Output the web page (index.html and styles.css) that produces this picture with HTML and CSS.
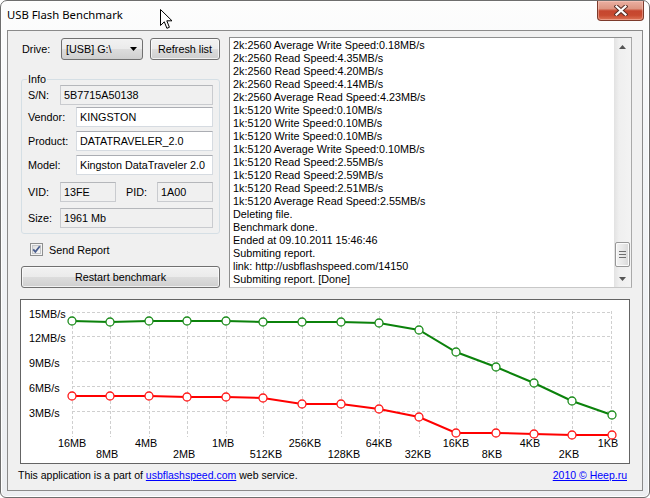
FILE: index.html
```html
<!DOCTYPE html>
<html>
<head>
<meta charset="utf-8">
<title>USB Flash Benchmark</title>
<link rel="stylesheet" href="styles.css">
</head>
<body>
<div class="window">
  <div class="titlebar">
    <span class="title">USB Flash Benchmark</span>
    <div class="close">
      <svg width="14" height="11" viewBox="0 0 14 11">
        <path d="M2.5 1.5 L11.5 9.5 M11.5 1.5 L2.5 9.5" stroke="#5a3028" stroke-width="4.2" stroke-linecap="square"/>
        <path d="M2.5 1.5 L11.5 9.5 M11.5 1.5 L2.5 9.5" stroke="#ffffff" stroke-width="2.2" stroke-linecap="square"/>
      </svg>
    </div>
  </div>
  <div class="client">
    <div class="top">
      <div class="left">
        <div class="drive-row">
          <span class="drive-lbl">Drive:</span>
          <div class="combo">
            <span class="combo-text">[USB] G:\</span>
            <svg class="combo-arrow" width="7" height="4" viewBox="0 0 7 4"><path d="M0 0 H7 L3.5 4 Z" fill="#000"/></svg>
          </div>
          <div class="btn refresh">Refresh list</div>
        </div>
        <fieldset class="group">
          <legend>Info</legend>
          <div class="row mt0"><span class="lbl short">S/N:</span><div class="box ro">5B7715A50138</div></div>
          <div class="row mt2"><span class="lbl long">Vendor:</span><div class="box">KINGSTON</div></div>
          <div class="row mt4"><span class="lbl long">Product:</span><div class="box">DATATRAVELER_2.0</div></div>
          <div class="row mt4"><span class="lbl long">Model:</span><div class="box">Kingston DataTraveler 2.0</div></div>
          <div class="row mt7">
            <span class="lbl short">VID:</span><div class="box ro vid">13FE</div>
            <span class="lbl pid-lbl">PID:</span><div class="box ro">1A00</div>
          </div>
          <div class="row mt6"><span class="lbl short">Size:</span><div class="box ro">1961 Mb</div></div>
        </fieldset>
        <div class="check-row">
          <svg class="checkbox" width="13" height="13" viewBox="0 0 13 13">
            <defs>
              <linearGradient id="cbg" x1="0" y1="0" x2="1" y2="1">
                <stop offset="0" stop-color="#dcdcdc"/>
                <stop offset="1" stop-color="#fbfbfb"/>
              </linearGradient>
            </defs>
            <rect x="0.5" y="0.5" width="12" height="12" fill="#f4f4f4" stroke="#8e8f8f"/>
            <rect x="2.5" y="2.5" width="8" height="8" fill="url(#cbg)" stroke="#c4c6c8"/>
            <path d="M3.2 6.3 L5.4 8.8 L9.8 3.2" fill="none" stroke="#4a5e8e" stroke-width="1.8"/>
          </svg>
          <span>Send Report</span>
        </div>
        <div class="btn restart">Restart benchmark</div>
      </div>
      <div class="log">
        <div class="log-text">2k:2560 Average Write Speed:0.18MB/s
2k:2560 Read Speed:4.35MB/s
2k:2560 Read Speed:4.20MB/s
2k:2560 Read Speed:4.14MB/s
2k:2560 Average Read Speed:4.23MB/s
1k:5120 Write Speed:0.10MB/s
1k:5120 Write Speed:0.10MB/s
1k:5120 Write Speed:0.10MB/s
1k:5120 Average Write Speed:0.10MB/s
1k:5120 Read Speed:2.55MB/s
1k:5120 Read Speed:2.59MB/s
1k:5120 Read Speed:2.51MB/s
1k:5120 Average Read Speed:2.55MB/s
Deleting file.
Benchmark done.
Ended at 09.10.2011 15:46:46
Submiting report.
link: http://usbflashspeed.com/14150
Submiting report. [Done]</div>
        <div class="scrollbar">
          <div class="sb-btn"><svg width="7" height="4" viewBox="0 0 7 4"><path d="M0 4 H7 L3.5 0 Z" fill="#555"/></svg></div>
          <div class="sb-track">
            <div class="sb-thumb"><span></span><span></span><span></span></div>
          </div>
          <div class="sb-btn"><svg width="7" height="4" viewBox="0 0 7 4"><path d="M0 0 H7 L3.5 4 Z" fill="#555"/></svg></div>
        </div>
      </div>
    </div>
    <div class="chart">
      <svg width="608" height="163" viewBox="0 0 608 163" class="chart-svg">
        <g class="grid">
          <path d="M51 12.5 H591 M51 36.5 H591 M51 61.5 H591 M51 86.5 H591 M51 111.5 H591"/>
          <path d="M51.5 11 V137 M89.5 11 V137 M128.5 11 V137 M166.5 11 V137 M205.5 11 V137 M242.5 11 V137 M281.5 11 V137 M320.5 11 V137 M358.5 11 V137 M398.5 11 V137 M435.5 11 V137 M475.5 11 V137 M513.5 11 V137 M551.5 11 V137 M590.5 11 V137"/>
        </g>
        <g class="ylabels">
          <text x="8" y="17.5">15MB/s</text>
          <text x="8" y="41.5">12MB/s</text>
          <text x="8" y="66.5">9MB/s</text>
          <text x="8" y="91.5">6MB/s</text>
          <text x="8" y="116.5">3MB/s</text>
        </g>
        <g class="xlabels">
          <text x="51" y="147">16MB</text>
          <text x="86" y="157.5">8MB</text>
          <text x="125" y="147">4MB</text>
          <text x="163" y="157.5">2MB</text>
          <text x="202" y="147">1MB</text>
          <text x="245" y="157.5">512KB</text>
          <text x="284" y="147">256KB</text>
          <text x="323" y="157.5">128KB</text>
          <text x="358" y="147">64KB</text>
          <text x="397" y="157.5">32KB</text>
          <text x="435" y="147">16KB</text>
          <text x="471" y="157.5">8KB</text>
          <text x="509" y="147">4KB</text>
          <text x="548" y="157.5">2KB</text>
          <text x="587" y="147">1KB</text>
        </g>
        <polyline class="line-green" points="51,21 89,22 128,21 166,21 205,21 242,22 281,22 320,22 358,23 398,30 435,52 475,67 513,83 551,101 591,115"/>
        <polyline class="line-red" points="51,96 89,96 128,96 166,97 205,97 242,98 281,104 320,104 358,109 398,117 435,133 475,133 513,134 551,135 591,135"/>
        <g class="dots-green">
          <circle cx="51" cy="21" r="4"/><circle cx="89" cy="22" r="4"/><circle cx="128" cy="21" r="4"/><circle cx="166" cy="21" r="4"/><circle cx="205" cy="21" r="4"/><circle cx="242" cy="22" r="4"/><circle cx="281" cy="22" r="4"/><circle cx="320" cy="22" r="4"/><circle cx="358" cy="23" r="4"/><circle cx="398" cy="30" r="4"/><circle cx="435" cy="52" r="4"/><circle cx="475" cy="67" r="4"/><circle cx="513" cy="83" r="4"/><circle cx="551" cy="101" r="4"/><circle cx="591" cy="115" r="4"/>
        </g>
        <g class="dots-red">
          <circle cx="51" cy="96" r="4"/><circle cx="89" cy="96" r="4"/><circle cx="128" cy="96" r="4"/><circle cx="166" cy="97" r="4"/><circle cx="205" cy="97" r="4"/><circle cx="242" cy="98" r="4"/><circle cx="281" cy="104" r="4"/><circle cx="320" cy="104" r="4"/><circle cx="358" cy="109" r="4"/><circle cx="398" cy="117" r="4"/><circle cx="435" cy="133" r="4"/><circle cx="475" cy="133" r="4"/><circle cx="513" cy="134" r="4"/><circle cx="551" cy="135" r="4"/><circle cx="591" cy="135" r="4"/>
        </g>
      </svg>
    </div>
    <div class="footer">
      <span>This application is a part of <a class="link">usbflashspeed.com</a> web service.</span>
      <a class="link">2010 © Heep.ru</a>
    </div>
  </div>
  <svg class="cursor" width="13" height="21" viewBox="0 0 13 21">
    <path d="M0.5 0.5 L0.5 16.5 L4.3 12.8 L6.9 19.3 L9.4 18.3 L6.8 11.8 L12 11.8 Z" fill="#ffffff" stroke="#000000" stroke-width="1" stroke-linejoin="miter"/>
  </svg>
</div>
</body>
</html>
```
FILE: styles.css
```css
* { box-sizing: border-box; }
html, body { margin: 0; padding: 0; background: #ffffff; }
body {
  font-family: "Liberation Sans", Arial, sans-serif;
  font-size: 10.8px;
  color: #000;
}
.window {
  position: relative;
  width: 650px;
  height: 498px;
  border: 1px solid #6e6e6e;
  border-radius: 7px 7px 6px 6px;
  background: linear-gradient(to bottom, #fdfdfd 0, #f3f5f7 30%, #eceef1 100%);
  box-shadow: inset 0 0 0 1px #ffffff;
  display: flex;
  flex-direction: column;
  overflow: hidden;
}
.titlebar {
  height: 29px;
  display: flex;
  justify-content: space-between;
  align-items: flex-start;
}
.title {
  font-family: "Noto Sans", "Open Sans", sans-serif;
  font-size: 11.3px;
  line-height: 16px;
  margin: 6px 0 0 6px;
  color: #000;
}
.close {
  width: 47px;
  height: 20px;
  margin-right: 5px;
  border: 1px solid #7c3a2c;
  border-top: none;
  border-radius: 0 0 4px 4px;
  background: linear-gradient(to bottom, #eab0a2 0%, #dd9582 40%, #c6462f 52%, #c84a30 75%, #dc7457 100%);
  box-shadow: inset 0 0 0 1px rgba(255, 210, 200, 0.45);
  display: flex;
  align-items: center;
  justify-content: center;
}
.client {
  margin: 0 6px;
  height: 461px;
  border: 1px solid #8a8a8a;
  background: #f0f0f0;
  display: flex;
  flex-direction: column;
}
.top {
  display: flex;
  gap: 9px;
  margin: 6px 0 0 13px;
}
.left {
  width: 199px;
  display: flex;
  flex-direction: column;
}
.drive-row {
  display: flex;
  align-items: center;
  height: 22px;
  margin-top: 1px;
}
.drive-lbl {
  width: 40px;
  padding-left: 1px;
}
.combo {
  width: 82px;
  height: 22px;
  margin-right: 7px;
  border: 1px solid #707070;
  border-radius: 3px;
  background: linear-gradient(to bottom, #f2f2f2 0%, #ebebeb 50%, #dddddd 50%, #cfcfcf 100%);
  display: flex;
  align-items: center;
  justify-content: space-between;
  padding: 0 5px 0 4px;
}
.btn {
  height: 22px;
  border: 1px solid #707070;
  border-radius: 3px;
  background: linear-gradient(to bottom, #f2f2f2 0%, #ebebeb 50%, #dddddd 50%, #cfcfcf 100%);
  box-shadow: inset 0 0 0 1px rgba(255, 255, 255, 0.7);
  display: flex;
  align-items: center;
  justify-content: center;
}
.refresh { width: 70px; }
.group {
  margin: 13px 0 0 0;
  padding: 0 6px 5px 6px;
  border: 1px solid #d5dfe5;
  border-radius: 3px;
  min-width: 0;
}
.group legend {
  padding: 0 1px;
  margin-left: -1px;
  line-height: 12px;
  color: #000;
}
.row {
  display: flex;
  align-items: center;
  height: 20px;
}
.mt0 { margin-top: 0; }
.mt2 { margin-top: 2px; }
.mt4 { margin-top: 4px; }
.mt6 { margin-top: 6px; }
.mt7 { margin-top: 7px; }
.lbl { flex: none; }
.short { width: 32px; }
.long { width: 48px; }
.pid-lbl { width: 31px; margin-left: 10px; }
.box {
  flex: 1;
  height: 20px;
  line-height: 18px;
  padding-left: 3px;
  border: 1px solid #d6dbe1;
  border-top-color: #abadb3;
  background: #ffffff;
  white-space: nowrap;
  overflow: hidden;
}
.box.ro {
  background: #f0f0f0;
  border-color: #c9cbcf;
  border-top-color: #b5b7bb;
}
.box.vid { flex: none; width: 56px; }
.check-row {
  display: flex;
  align-items: center;
  height: 13px;
  margin-top: 9px;
  padding-left: 9px;
}
.checkbox { margin-right: 6px; }
.restart { margin-top: 10px; }
.log {
  width: 403px;
  height: 251px;
  border: 1px solid #8e8f8f;
  border-right-color: #a9a9a9;
  border-bottom-color: #c8c8c8;
  background: #ffffff;
  display: flex;
}
.log-text {
  flex: 1;
  padding: 1px 0 0 3px;
  line-height: 13px;
  white-space: pre;
  overflow: hidden;
}
.scrollbar {
  width: 17px;
  display: flex;
  flex-direction: column;
  background: linear-gradient(to right, #e2e2e2 0%, #efefef 30%, #f3f3f3 100%);
}
.sb-btn {
  height: 17px;
  display: flex;
  align-items: center;
  justify-content: center;
}
.sb-track {
  flex: 1;
  display: flex;
  flex-direction: column;
  justify-content: flex-end;
  padding: 0 1px 3px 1px;
}
.sb-thumb {
  height: 25px;
  border: 1px solid #979797;
  border-radius: 2px;
  background: linear-gradient(to right, #f3f3f3 0%, #e8e8e8 50%, #d8d8d8 100%);
  box-shadow: inset 0 0 0 1px #fbfbfb;
  display: flex;
  flex-direction: column;
  align-items: center;
  justify-content: center;
  gap: 2px;
}
.sb-thumb span {
  display: block;
  width: 7px;
  height: 1px;
  background: #6f6f6f;
}
.chart {
  margin: 11px 12px 0 12px;
  height: 165px;
  border: 1px solid #646464;
  background: #ffffff;
}
.chart-svg { display: block; }
.grid path {
  fill: none;
  stroke: #cfcfcf;
  stroke-width: 1;
  stroke-dasharray: 3 2;
}
.ylabels text, .xlabels text {
  font-family: "Liberation Sans", Arial, sans-serif;
  font-size: 10.8px;
  fill: #000;
}
.xlabels text { text-anchor: middle; }
.line-green { fill: none; stroke: #0b820b; stroke-width: 2; }
.line-red { fill: none; stroke: #ff0000; stroke-width: 2; }
.dots-green circle { fill: #ffffff; stroke: #1c8c1c; stroke-width: 1.3; }
.dots-red circle { fill: #ffffff; stroke: #ff1a1a; stroke-width: 1.3; }
.footer {
  flex: 1;
  display: flex;
  justify-content: space-between;
  align-items: flex-start;
  padding: 5px 15px 0 10px;
  line-height: 13px;
  font-size: 10.5px;
}
.link {
  color: #0000ff;
  text-decoration: underline;
}
.cursor {
  position: absolute;
  left: 159px;
  top: 8px;
}
```
